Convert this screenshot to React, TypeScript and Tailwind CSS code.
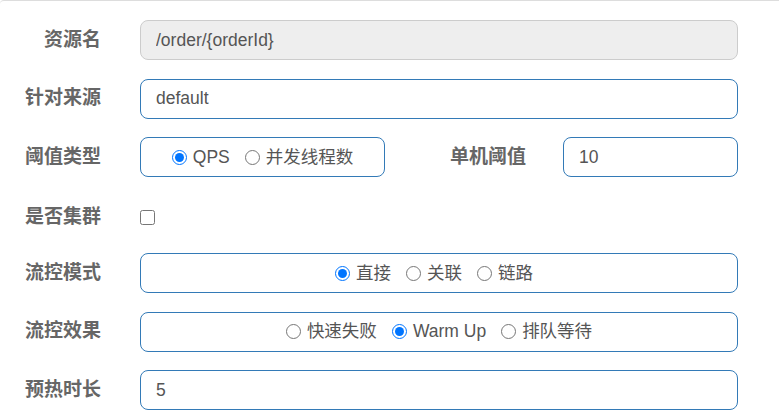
const font = { fontFamily: '"Liberation Sans", "Noto Sans CJK SC", sans-serif' };

function Label({ children, className = '' }: { children: React.ReactNode; className?: string }) {
  return (
    <label className={`shrink-0 text-right font-bold text-[19px] text-[#666] ${className}`}>
      {children}
    </label>
  );
}

function Radio({ label, checked, name }: { label: string; checked?: boolean; name: string }) {
  return (
    <label className="flex items-center">
      <input type="radio" name={name} defaultChecked={checked} className="w-[15px] h-[15px] m-0" />
      <span className="ml-[6px]">{label}</span>
    </label>
  );
}

function RadioBox({ name, items, checked, className = '' }: { name: string; items: string[]; checked: number; className?: string }) {
  return (
    <div
      className={`h-10 flex items-center justify-center gap-[15px] rounded-[8px] border border-[#337ab7] text-[17.5px] text-[#555] ${className}`}
    >
      {items.map((it, i) => (
        <Radio key={it} label={it} name={name} checked={i === checked} />
      ))}
    </div>
  );
}

function TextInput({ value, disabled, className = '' }: { value: string; disabled?: boolean; className?: string }) {
  return (
    <input
      readOnly
      value={value}
      disabled={disabled}
      className={`h-10 min-w-0 rounded-[8px] border px-[15px] text-[17.5px] text-[#555] outline-none ${
        disabled ? 'bg-[#eee] border-[#ccc]' : 'bg-white border-[#337ab7]'
      } ${className}`}
      style={font}
    />
  );
}

export default function App() {
  return (
    <div className="w-[779px] h-[417px] bg-white overflow-hidden border-t border-[#ddd] rounded-tl-[4px]" style={font}>
      <div className="flex flex-col gap-[18.5px] pt-[19px] pr-[41px]">
        <div className="flex items-center h-10">
          <Label className="w-[101px]">资源名</Label>
          <TextInput value="/order/{orderId}" disabled className="ml-[39px] flex-1" />
        </div>

        <div className="flex items-center h-10">
          <Label className="w-[101px]">针对来源</Label>
          <TextInput value="default" className="ml-[39px] flex-1" />
        </div>

        <div className="flex items-center h-10">
          <Label className="w-[101px]">阈值类型</Label>
          <RadioBox name="grade" items={['QPS', '并发线程数']} checked={0} className="ml-[39px] w-[245px]" />
          <Label className="w-[141px]">单机阈值</Label>
          <TextInput value="10" className="ml-[37px] flex-1" />
        </div>

        <div className="flex items-center h-[39px] pt-[4px]">
          <Label className="w-[101px]">是否集群</Label>
          <input type="checkbox" className="ml-[39px] w-[15px] h-[15px] m-0" />
        </div>

        <div className="flex items-center h-10">
          <Label className="w-[101px]">流控模式</Label>
          <RadioBox name="strategy" items={['直接', '关联', '链路']} checked={0} className="ml-[39px] flex-1 pr-[10px]" />
        </div>

        <div className="flex items-center h-10">
          <Label className="w-[101px]">流控效果</Label>
          <RadioBox name="behavior" items={['快速失败', 'Warm Up', '排队等待']} checked={1} className="ml-[39px] flex-1" />
        </div>

        <div className="flex items-center h-10">
          <Label className="w-[101px]">预热时长</Label>
          <TextInput value="5" className="ml-[39px] flex-1" />
        </div>
      </div>
    </div>
  );
}
